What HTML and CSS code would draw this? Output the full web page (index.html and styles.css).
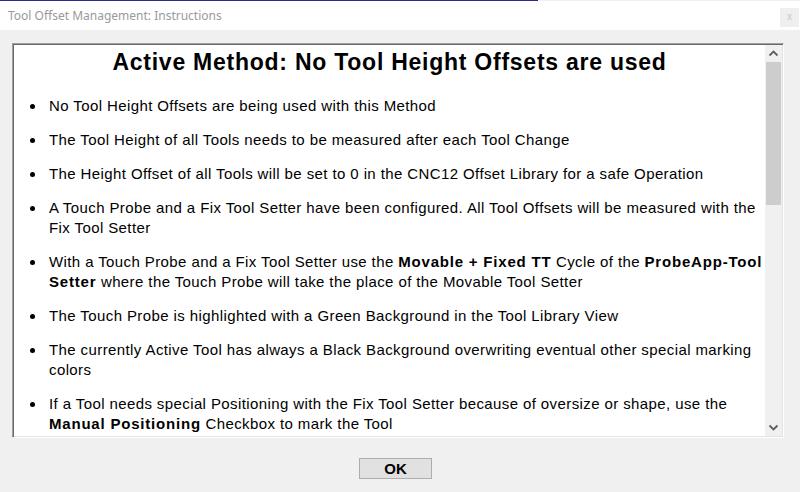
FILE: index.html
```html
<!DOCTYPE html>
<html>
<head>
<meta charset="utf-8">
<link rel="stylesheet" href="styles.css">
</head>
<body>
<div class="window">
  <div class="topline"></div>
  <div class="titlebar">
    <span class="title">Tool Offset Management: Instructions</span>
    <span class="close">x</span>
  </div>
  <div class="client">
    <div class="box">
      <div class="content">
        <h1 class="heading">Active Method: No Tool Height Offsets are used</h1>
        <ul class="items">
          <li class="item"><span class="dot"></span><span class="txt">No Tool Height Offsets are being used with this Method</span></li>
          <li class="item"><span class="dot"></span><span class="txt">The Tool Height of all Tools needs to be measured after each Tool Change</span></li>
          <li class="item"><span class="dot"></span><span class="txt">The Height Offset of all Tools will be set to 0 in the CNC12 Offset Library for a safe Operation</span></li>
          <li class="item"><span class="dot"></span><span class="txt">A Touch Probe and a Fix Tool Setter have been configured. All Tool Offsets will be measured with the<br>Fix Tool Setter</span></li>
          <li class="item"><span class="dot"></span><span class="txt">With a Touch Probe and a Fix Tool Setter use the <b>Movable + Fixed TT</b> Cycle of the <b>ProbeApp-Tool<br>Setter</b> where the Touch Probe will take the place of the Movable Tool Setter</span></li>
          <li class="item"><span class="dot"></span><span class="txt">The Touch Probe is highlighted with a Green Background in the Tool Library View</span></li>
          <li class="item"><span class="dot"></span><span class="txt">The currently Active Tool has always a Black Background overwriting eventual other special marking<br>colors</span></li>
          <li class="item"><span class="dot"></span><span class="txt">If a Tool needs special Positioning with the Fix Tool Setter because of oversize or shape, use the<br><b>Manual Positioning</b> Checkbox to mark the Tool</span></li>
        </ul>
      </div>
      <div class="scrollbar">
        <svg class="arrow" width="15" height="15" viewBox="0 0 15 15"><path d="M3.5 9.5 L7.5 5.5 L11.5 9.5" fill="none" stroke="#606060" stroke-width="1.8"/></svg>
        <div class="track"><div class="thumb"></div></div>
        <svg class="arrow" width="15" height="15" viewBox="0 0 15 15"><path d="M3.5 5.5 L7.5 9.5 L11.5 5.5" fill="none" stroke="#606060" stroke-width="1.8"/></svg>
      </div>
    </div>
    <div class="buttons">
      <button class="ok">OK</button>
    </div>
  </div>
</div>
</body>
</html>
```

FILE: styles.css
```css
html, body {
  margin: 0;
  padding: 0;
  background: #f0f0f0;
}
.window {
  width: 800px;
  height: 492px;
  display: flex;
  flex-direction: column;
  background: #f0f0f0;
  overflow: hidden;
}
.topline {
  height: 1px;
  width: 538px;
  background: #2b2b8c;
}
.titlebar {
  height: 29px;
  background: #ffffff;
  display: flex;
  align-items: flex-start;
  justify-content: space-between;
}
.title {
  font-family: "Noto Sans", "Open Sans", sans-serif;
  font-size: 12px;
  color: #9a9a9a;
  margin: 7px 0 0 8px;
  line-height: 16px;
}
.close {
  width: 19px;
  height: 19px;
  margin: 7px 1px 0 0;
  background: #efefef;
  color: #c8c8c8;
  font-family: "Liberation Sans", sans-serif;
  font-size: 10px;
  line-height: 18px;
  text-align: center;
}
.client {
  flex: 1;
  display: flex;
  flex-direction: column;
  padding: 13px 16px 0 12px;
}
.box {
  height: 391px;
  display: flex;
  border-top: 1px solid #a0a0a0;
  border-left: 1px solid #a0a0a0;
  border-right: 1px solid #ffffff;
  border-bottom: 1px solid #ffffff;
  box-shadow: inset 1px 1px 0 #696969, inset -1px -1px 0 #e3e3e3;
  padding: 1px;
  background: #ffffff;
}
.content {
  flex: 1;
  overflow: hidden;
  font-family: "Liberation Sans", Arial, sans-serif;
  color: #000000;
}
.heading {
  margin: 0;
  padding-top: 3px;
  font-size: 23px;
  letter-spacing: 0.75px;
  line-height: 28px;
  font-weight: bold;
  text-align: center;
}
.items {
  list-style: none;
  margin: 0;
  padding: 20px 0 0 16px;
}
.item {
  display: flex;
  align-items: flex-start;
  margin-bottom: 14px;
  font-size: 15px;
  letter-spacing: 0.4px;
  line-height: 20px;
}
.item b {
  letter-spacing: 0.8px;
}
.dot {
  flex: none;
  width: 5px;
  height: 5px;
  border-radius: 50%;
  background: #000000;
  margin: 8px 14px 0 0;
}
.txt {
  white-space: nowrap;
}
.scrollbar {
  width: 17px;
  flex: none;
  display: flex;
  flex-direction: column;
  align-items: center;
  background: #f0f0f0;
}
.arrow {
  flex: none;
  margin: 1px 0;
}
.track {
  flex: 1;
  width: 100%;
  display: flex;
  flex-direction: column;
  align-items: center;
}
.thumb {
  width: 15px;
  height: 143px;
  margin-top: 0;
  background: #cdcdcd;
}
.buttons {
  display: flex;
  justify-content: center;
  padding: 20px 5px 0 0;
}
.ok {
  width: 73px;
  height: 21px;
  border: 1px solid #adadad;
  background: #e1e1e1;
  font-family: "Liberation Sans", Arial, sans-serif;
  font-weight: bold;
  font-size: 15px;
  color: #000000;
  padding: 0;
  line-height: 19px;
}
```
